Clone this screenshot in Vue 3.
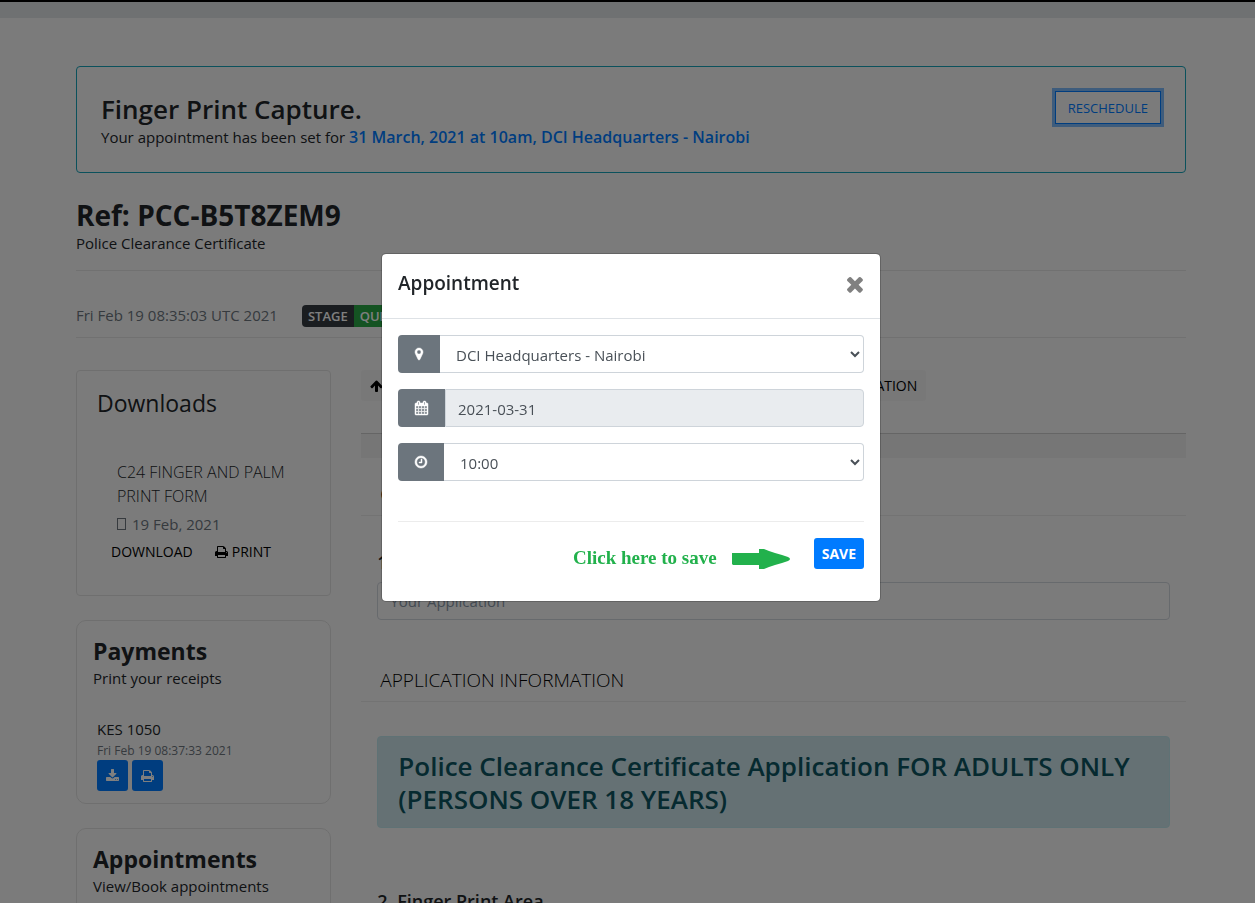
<script setup>
import { ref } from 'vue'

const icons = {
  marker: { box: '0 0 1024 1792', d: 'M768 640q0-106-75-181t-181-75-181 75-75 181 75 181 181 75 181-75 75-181zm256 0q0 109-33 179l-364 774q-16 33-47.500 52t-67.500 19-67.500-19-46.500-52l-365-774q-33-70-33-179 0-212 150-362t362-150 362 150 150 362z' },
  calendar: { box: '64 0 1664 1792', d: 'M192 1664h288v-288h-288v288zm352 0h320v-288h-320v288zm-352-352h288v-320h-288v320zm352 0h320v-320h-320v320zm-352-384h288v-288h-288v288zm736 736h320v-288h-320v288zm-384-736h320v-288h-320v288zm768 736h288v-288h-288v288zm-384-352h320v-320h-320v320zm-352-864v-288q0-13-9.500-22.500t-22.500-9.500h-64q-13 0-22.500 9.500t-9.500 22.500v288q0 13 9.500 22.500t22.500 9.500h64q13 0 22.500-9.500t9.500-22.500zm736 864h288v-320h-288v320zm-384-384h320v-288h-320v288zm384 0h288v-288h-288v288zm32-480v-288q0-13-9.500-22.500t-22.500-9.500h-64q-13 0-22.500 9.500t-9.500 22.500v288q0 13 9.500 22.500t22.500 9.500h64q13 0 22.500-9.500t9.500-22.500zm384-64v1280q0 52-38 90t-90 38h-1408q-52 0-90-38t-38-90v-1280q0-52 38-90t90-38h128v-96q0-66 47-113t113-47h64q66 0 113 47t47 113v96h384v-96q0-66 47-113t113-47h64q66 0 113 47t47 113v96h128q52 0 90 38t38 90z' },
  clock: { box: '128 0 1536 1792', d: 'M1024 544v448q0 14-9 23t-23 9h-320q-14 0-23-9t-9-23v-64q0-14 9-23t23-9h224v-352q0-14 9-23t23-9h64q14 0 23 9t9 23zm416 352q0-148-73-273t-198-198-273-73-273 73-198 198-73 273 73 273 198 198 273 73 273-73 198-198 73-273zm224 0q0 209-103 385.500t-279.500 279.500-385.500 103-385.500-103-279.500-279.500-103-385.500 103-385.500 279.500-279.500 385.500-103 385.500 103 279.500 279.500 103 385.500z' },
  download: { box: '64 0 1664 1792', d: 'M1344 1344q0-26-19-45t-45-19-45 19-19 45 19 45 45 19 45-19 19-45zm256 0q0-26-19-45t-45-19-45 19-19 45 19 45 45 19 45-19 19-45zm128-224v320q0 40-28 68t-68 28h-1472q-40 0-68-28t-28-68v-320q0-40 28-68t68-28h465l135 136q58 56 136 56t136-56l136-136h464q40 0 68 28t28 68zm-325-569q17 41-14 70l-448 448q-18 19-45 19t-45-19l-448-448q-31-29-14-70 17-39 59-39h256v-448q0-26 19-45t45-19h256q26 0 45 19t19 45v448h256q42 0 59 39z' },
  print: { box: '0 0 1664 1792', d: 'M384 1536h896v-256h-896v256zM384 896h896v-384h-160q-40 0-68-28t-28-68v-160h-640v640zM1536 960q0-26-19-45t-45-19-45 19-19 45 19 45 45 19 45-19 19-45zM1664 960v416q0 13-9.500 22.500t-22.500 9.500h-224v160q0 40-28 68t-68 28h-960q-40 0-68-28t-28-68v-160h-224q-13 0-22.500-9.500t-9.500-22.500v-416q0-79 56.500-135.500t135.500-56.500h64v-544q0-40 28-68t68-28h672q40 0 88 20t76 48l152 152q28 28 48 76t20 88v256h64q79 0 135.500 56.500t56.500 135.500z' },
  times: { box: '302 0 1188 1792', d: 'M1490 1322q0 40-28 68l-136 136q-28 28-68 28t-68-28l-294-294-294 294q-28 28-68 28t-68-28l-136-136q-28-28-28-68t28-68l294-294-294-294q-28-28-28-68t28-68l136-136q28-28 68-28t68 28l294 294 294-294q28-28 68-28t68 28l136 136q28 28 28 68t-28 68l-294 294 294 294q28 28 28 68z' },
  up: { box: '64 0 1664 1792', d: 'M1675 971q0 51-37 90l-75 75q-38 38-91 38-54 0-90-38l-294-293v704q0 52-37.500 84.500t-90.500 32.500h-128q-53 0-90.500-32.500t-37.500-84.500v-704l-294 293q-36 38-90 38t-90-38l-75-75q-38-38-38-90 0-53 38-91l651-651q35-37 90-37 54 0 91 37l651 651q37 39 37 91z' }
}

const place = ref('DCI Headquarters - Nairobi')
const date = ref('2021-03-31')
const time = ref('10:00')
</script>

<template>
  <div class="page">
    <div class="topline"></div>
    <div class="band"></div>

    <main class="container">
      <section class="notice">
        <div class="notice-text">
          <h2 class="h-large">Finger Print Capture.</h2>
          <p>Your appointment has been set for <strong>31 March, 2021 at 10am, DCI Headquarters - Nairobi</strong></p>
        </div>
        <button type="button" class="reschedule">RESCHEDULE</button>
      </section>

      <header class="reference">
        <h1 class="h-large">Ref: PCC-B5T8ZEM9</h1>
        <p>Police Clearance Certificate</p>
      </header>

      <div class="status">
        <span class="muted">Fri Feb 19 08:35:03 UTC 2021</span>
        <span class="badge"><b class="dark">STAGE</b><b class="green">QUEUED</b></span>
      </div>

      <div class="columns">
        <aside>
          <section class="card downloads">
            <h3>Downloads</h3>
            <div class="file">
              <p class="filename">C24 FINGER AND PALM PRINT FORM</p>
              <p class="muted filedate"><span class="tofu"></span>19 Feb, 2021</p>
            </div>
            <div class="actions">
              <a href="#download">DOWNLOAD</a>
              <a href="#print"><svg class="icon" :viewBox="icons.print.box"><path :d="icons.print.d" /></svg>PRINT</a>
            </div>
          </section>

          <section class="card round payments">
            <h3>Payments</h3>
            <p>Print your receipts</p>
            <div class="receipt">
              <p>KES 1050</p>
              <small>Fri Feb 19 08:37:33 2021</small>
              <div class="squares">
                <button type="button" aria-label="Download receipt"><svg class="icon" :viewBox="icons.download.box"><path :d="icons.download.d" /></svg></button>
                <button type="button" aria-label="Print receipt"><svg class="icon" :viewBox="icons.print.box"><path :d="icons.print.d" /></svg></button>
              </div>
            </div>
          </section>

          <section class="card round">
            <h3>Appointments</h3>
            <p>View/Book appointments</p>
          </section>
        </aside>

        <div class="content">
          <div class="toolbar">
            <svg class="icon" :viewBox="icons.up.box"><path :d="icons.up.d" /></svg>
            <span>APPLICATION</span>
          </div>
          <div class="strip"></div>
          <h4 class="section first">CERTIFICATE</h4>
          <div class="field">
            <label for="application">1. Application</label>
            <input id="application" class="control" placeholder="Your Application">
          </div>
          <h4 class="section">APPLICATION INFORMATION</h4>
          <div class="info">Police Clearance Certificate Application FOR ADULTS ONLY (PERSONS OVER 18 YEARS)</div>
          <h5>2. Finger Print Area</h5>
        </div>
      </div>
    </main>

    <div class="backdrop">
      <div class="modal" role="dialog" aria-labelledby="modal-title">
        <div class="modal-head">
          <h2 id="modal-title">Appointment</h2>
          <button type="button" class="close" aria-label="Close"><svg :viewBox="icons.times.box"><path :d="icons.times.d" /></svg></button>
        </div>
        <form class="modal-body" @submit.prevent>
          <div class="group">
            <label class="addon" for="place" aria-label="Location"><svg class="icon" :viewBox="icons.marker.box"><path :d="icons.marker.d" /></svg></label>
            <select id="place" v-model="place" class="control"><option>DCI Headquarters - Nairobi</option></select>
          </div>
          <div class="group">
            <label class="addon" for="date" aria-label="Date"><svg class="icon" :viewBox="icons.calendar.box"><path :d="icons.calendar.d" /></svg></label>
            <input id="date" v-model="date" class="control" readonly>
          </div>
          <div class="group">
            <label class="addon" for="time" aria-label="Time"><svg class="icon" :viewBox="icons.clock.box"><path :d="icons.clock.d" /></svg></label>
            <select id="time" v-model="time" class="control"><option>10:00</option></select>
          </div>
          <div class="foot">
            <span class="hint">Click here to save</span>
            <svg class="arrow" viewBox="0 0 59 20"><path d="M0 4H27V0H32L37 2L43 4L50 6L56 8Q60 10 56 12L50 14L43 16L37 18L32 20H27V16H1L0 15Z" /></svg>
            <button type="submit" class="save">SAVE</button>
          </div>
        </form>
      </div>
    </div>
  </div>
</template>

<style>
body {
  margin: 0;
  overflow: hidden;
}
</style>

<style scoped>
* {
  box-sizing: border-box;
}
h1, h2, h3, h4, h5, p {
  margin: 0;
}
button, input, select {
  font-family: inherit;
}
.page {
  height: 100vh;
  overflow: hidden;
  background: #f7f7f7;
  color: #212529;
  font: 400 15px/24px "Open Sans", "Noto Sans", sans-serif;
}
.icon {
  height: 14px;
  fill: currentColor;
}
.muted {
  color: #6c757d;
}
.topline {
  height: 2px;
  background: #000;
}
.band {
  height: 16px;
  background: #dfe2e5;
}
.container {
  padding: 48px 69px 0 76px;
}
.notice {
  display: flex;
  justify-content: space-between;
  align-items: flex-start;
  height: 107px;
  padding: 24px;
  border: 1px solid #17a2b8;
  border-radius: 4px;
}
.notice-text {
  padding-top: 2px;
}
.notice strong {
  color: #007bff;
  font-size: 16px;
  font-weight: 600;
}
.h-large {
  font-size: 26px;
  line-height: 32px;
  font-weight: 600;
}
.reschedule {
  height: 33px;
  padding: 0 12px;
  border: 1px solid #007bff;
  background: none;
  box-shadow: 0 0 0 3px #7db9f8;
  color: #007bff;
  font-size: 13px;
}
.reference {
  padding: 26px 0 15px;
  border-bottom: 1px solid #e2e2e2;
}
.reference h1 {
  font-size: 28px;
  font-weight: 700;
}
.status {
  display: flex;
  align-items: flex-end;
  gap: 24px;
  height: 67px;
  padding-bottom: 10px;
  border-bottom: 1px solid #e2e2e2;
}
.badge {
  display: flex;
  border-radius: 4px;
  overflow: hidden;
  color: #fff;
  font-size: 13px;
  line-height: 22px;
}
.badge b {
  padding: 0 6px;
  font-weight: 600;
}
.dark {
  background: #343a40;
}
.green {
  background: #28a745;
}
.columns {
  display: grid;
  grid-template-columns: 23% minmax(0, 1fr);
  gap: 30px;
  padding-top: 32px;
}
.card {
  margin-bottom: 24px;
  padding: 16px;
  border: 1px solid #dfdfdf;
  border-radius: 4px;
}
.round {
  border-radius: 10px;
}
.card h3 {
  font-size: 23px;
  line-height: 29px;
  font-weight: 700;
}
.downloads {
  padding: 16px 20px 31px;
}
.card.downloads h3 {
  margin-bottom: 41px;
  line-height: 32px;
  font-weight: 400;
}
.file {
  padding-left: 20px;
}
.filename {
  font-size: 16px;
  font-weight: 300;
}
.filedate {
  display: flex;
  align-items: center;
  gap: 6px;
  padding-top: 4px;
}
.tofu {
  width: 9px;
  height: 12px;
  border: 1px solid currentColor;
}
.actions {
  display: flex;
  gap: 22px;
  padding: 4px 0 0 14px;
}
.actions a {
  display: flex;
  align-items: center;
  gap: 4px;
  color: #000;
  font-size: 14px;
  text-decoration: none;
}
.payments {
  padding-bottom: 12px;
}
.receipt {
  padding: 27px 0 0 4px;
}
.receipt small {
  display: block;
  color: #6c757d;
  font-size: 12px;
  line-height: 19px;
}
.squares {
  display: flex;
  gap: 4px;
}
.squares button {
  display: flex;
  align-items: center;
  justify-content: center;
  width: 31px;
  height: 31px;
  padding: 0;
  border: 0;
  border-radius: 3px;
  background: #007bff;
  color: #fff;
}
.toolbar {
  display: flex;
  justify-content: space-between;
  align-items: center;
  width: 565px;
  height: 31px;
  padding: 0 9px;
  border-radius: 3px;
  background: #f1f1f1;
  color: #000;
  font-size: 14px;
}
.strip {
  height: 25px;
  margin-top: 32px;
  border-top: 1px solid #cbcbcb;
  background: #ececec;
}
.section {
  padding: 0 19px 6px;
  border-bottom: 1px solid #e6e6e6;
  font-size: 19px;
  line-height: 29px;
  font-weight: 300;
  color: #000;
}
.section.first {
  margin-top: 22px;
}
.field {
  padding: 32px 16px 46px;
}
.field label, h5 {
  display: block;
  font-size: 18px;
  line-height: 28px;
  font-weight: 600;
}
.control {
  display: block;
  width: 100%;
  height: 38px;
  padding: 2px 12px 0;
  border: 1px solid #ced4da;
  border-radius: 4px;
  background: transparent;
  color: #495057;
  font-size: 15px;
}
.field .control {
  margin-top: 6px;
  padding-top: 0;
}
.control::placeholder {
  color: #8795a5;
}
.info {
  margin: 34px 16px 59px;
  padding: 13px 18px 11px 20px;
  border: 1px solid #bee5eb;
  border-radius: 4px;
  background: #cbe2e9;
  color: #0c5460;
  font-size: 26px;
  line-height: 33px;
  font-weight: 600;
}
h5 {
  padding-left: 16px;
}
.backdrop {
  position: fixed;
  inset: 0;
  display: flex;
  justify-content: center;
  align-items: flex-start;
  padding: 253px 0 0 7px;
  background: rgba(0, 0, 0, 0.5);
}
.modal {
  width: 500px;
  border: 1px solid rgba(0, 0, 0, 0.2);
  border-radius: 5px;
  background: #fff;
  background-clip: padding-box;
}
.modal-head {
  display: flex;
  justify-content: space-between;
  height: 65px;
  padding: 14px 16px;
  border-bottom: 1px solid #dee2e6;
}
.modal-head h2 {
  font-size: 19px;
  line-height: 30px;
  font-weight: 600;
}
.close {
  display: flex;
  align-items: center;
  height: 32px;
  padding: 0 1px;
  border: 0;
  background: none;
}
.close svg {
  height: 24px;
  fill: #808080;
}
.modal-body {
  display: flex;
  flex-direction: column;
  gap: 16px;
  padding: 16px 16px 31px;
}
.group {
  display: flex;
}
.addon {
  display: flex;
  align-items: center;
  padding: 0 17px;
  border-radius: 4px 0 0 4px;
  background: #6c757d;
  color: #fff;
}
.addon .icon {
  overflow: visible;
  stroke: currentColor;
  stroke-width: 60;
}
.group .control {
  flex: 1;
  min-width: 0;
  border-radius: 0 4px 4px 0;
}
.group select.control {
  border-left: 0;
  background: #fff;
}
.group input.control {
  background: #e9ecef;
}
.foot {
  display: flex;
  justify-content: flex-end;
  align-items: flex-start;
  margin-top: 24px;
  padding-top: 16px;
  border-top: 1px solid #ececec;
}
.hint {
  padding-top: 8px;
  color: #22b14c;
  font: 700 19px/24px "Liberation Serif", serif;
}
.arrow {
  width: 59px;
  height: 20px;
  margin: 11px 23px 0 15px;
  fill: #22b14c;
}
.save {
  height: 31px;
  padding: 0 8px;
  border: 0;
  border-radius: 3px;
  background: #007bff;
  color: #fff;
  font-size: 14px;
  font-weight: 700;
}
</style>
